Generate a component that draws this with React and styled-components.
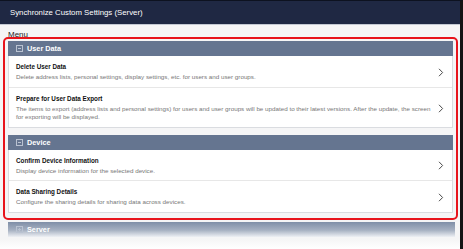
import React from 'react';
import styled, { createGlobalStyle } from 'styled-components';

const GlobalStyle = createGlobalStyle`
  html, body {
    margin: 0;
    padding: 0;
    background: #fff;
  }
  body {
    font-family: "Liberation Sans", Arial, sans-serif;
  }
`;

const Window = styled.div`
  position: relative;
  width: 463px;
  height: 249px;
  box-sizing: border-box;
  overflow: hidden;
  background: #f5f5f6;
  border-top: 1px solid #0d1220;
  border-right: 3px solid #141414;
  display: flex;
  flex-direction: column;
`;

const TitleBar = styled.div`
  flex: none;
  height: 23px;
  display: flex;
  align-items: center;
  padding-left: 10px;
  background: #1f2843;
  border-bottom: 1px solid #c3c8d2;
  color: #fff;
  font-size: 7.8px;
`;

const MenuLabel = styled.div`
  padding: 7px 0 0 8px;
  height: 5px;
  font-size: 8px;
  line-height: 6px;
  color: #222;
`;

const Highlight = styled.div`
  margin: 0 2px 0 3px;
  padding: 2px 3px 5px 3px;
  border: 2px solid #e8141c;
  border-radius: 5px;
  display: flex;
  flex-direction: column;
  gap: 7px;
`;

const Section = styled.div`
  display: flex;
  flex-direction: column;
`;

const SectionBar = styled.div`
  height: 15px;
  display: flex;
  align-items: center;
  gap: 4px;
  padding-left: 8px;
  background: ${p => (p.$faded ? 'linear-gradient(#7f8ea7, #a7b1c2 55%, #eef0f4 100%)' : '#657590')};
  color: #fff;
  font-size: 7.3px;
  font-weight: bold;
`;

const Toggle = styled.span`
  position: relative;
  width: 5px;
  height: 5px;
  border: 1px solid #b9c2d1;
  &::before {
    content: '';
    position: absolute;
    left: 1px;
    right: 1px;
    top: 2px;
    height: 1px;
    background: #b9c2d1;
  }
  &::after {
    content: '';
    display: ${p => (p.$plus ? 'block' : 'none')};
    position: absolute;
    top: 1px;
    bottom: 1px;
    left: 2px;
    width: 1px;
    background: #b9c2d1;
  }
`;

const List = styled.div`
  background: #fff;
  border: 1px solid #dadce0;
  border-top: none;
`;

const Item = styled.div`
  display: flex;
  align-items: center;
  padding: 7px 8px 5px 7px;
  & + & {
    border-top: 1px solid #e7e7e7;
  }
`;

const ItemText = styled.div`
  flex: 1;
  padding-right: 2px;
`;

const ItemTitle = styled.div`
  font-size: 6.3px;
  line-height: 8px;
  font-weight: bold;
  color: #111;
`;

const ItemDesc = styled.div`
  margin-top: 2px;
  font-size: 6.25px;
  line-height: 8.5px;
  color: #777;
`;

const Fade = styled.div`
  position: absolute;
  left: 0;
  right: 0;
  bottom: 0;
  height: 10px;
  background: linear-gradient(rgba(255, 255, 255, 0), #fff);
`;

const Chevron = () => (
  <svg width="6" height="9" viewBox="0 0 6 9">
    <path d="M1 0.8 L4.6 4.5 L1 8.2" fill="none" stroke="#4a4a4a" strokeWidth="1" />
  </svg>
);

const sections = [
  {
    name: 'User Data',
    items: [
      {
        title: 'Delete User Data',
        desc: 'Delete address lists, personal settings, display settings, etc. for users and user groups.',
      },
      {
        title: 'Prepare for User Data Export',
        desc: 'The items to export (address lists and personal settings) for users and user groups will be updated to their latest versions. After the update, the screen for exporting will be displayed.',
      },
    ],
  },
  {
    name: 'Device',
    items: [
      { title: 'Confirm Device Information', desc: 'Display device information for the selected device.' },
      { title: 'Data Sharing Details', desc: 'Configure the sharing details for sharing data across devices.' },
    ],
  },
];

export default function App() {
  return (
    <>
      <GlobalStyle />
      <Window>
        <TitleBar>Synchronize Custom Settings (Server)</TitleBar>
        <MenuLabel>Menu</MenuLabel>
        <Highlight>
          {sections.map(s => (
            <Section key={s.name}>
              <SectionBar>
                <Toggle />
                {s.name}
              </SectionBar>
              <List>
                {s.items.map(it => (
                  <Item key={it.title}>
                    <ItemText>
                      <ItemTitle>{it.title}</ItemTitle>
                      <ItemDesc>{it.desc}</ItemDesc>
                    </ItemText>
                    <Chevron />
                  </Item>
                ))}
              </List>
            </Section>
          ))}
        </Highlight>
        <Section style={{ margin: '2px 5px 0 8px' }}>
          <SectionBar $faded>
            <Toggle $plus />
            Server
          </SectionBar>
        </Section>
        <Fade />
      </Window>
    </>
  );
}
